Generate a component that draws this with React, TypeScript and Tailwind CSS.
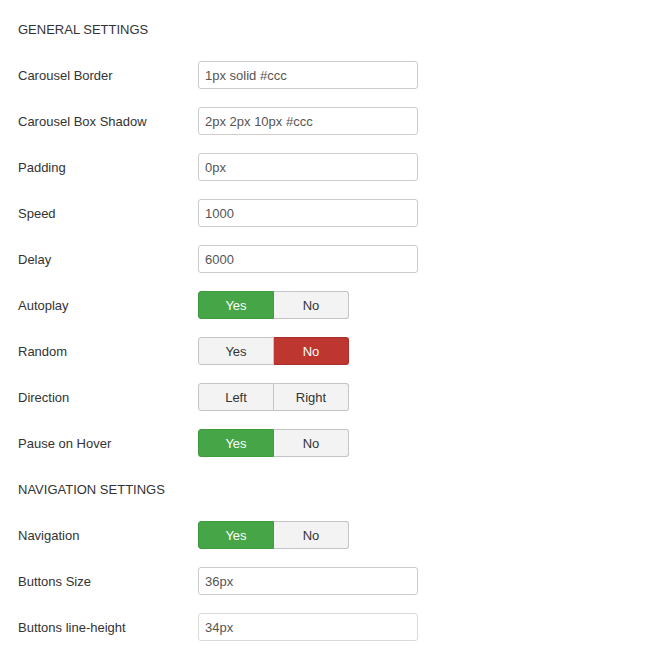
type Field =
    | { kind: 'heading'; label: string }
    | { kind: 'text'; label: string; value: string; faded?: boolean }
    | { kind: 'toggle'; label: string; options: [string, string]; active?: 0 | 1; tone?: 'yes' | 'no' }

const fields: Field[] = [
    { kind: 'heading', label: 'General Settings' },
    { kind: 'text', label: 'Carousel Border', value: '1px solid #ccc' },
    { kind: 'text', label: 'Carousel Box Shadow', value: '2px 2px 10px #ccc' },
    { kind: 'text', label: 'Padding', value: '0px' },
    { kind: 'text', label: 'Speed', value: '1000' },
    { kind: 'text', label: 'Delay', value: '6000' },
    { kind: 'toggle', label: 'Autoplay', options: ['Yes', 'No'], active: 0, tone: 'yes' },
    { kind: 'toggle', label: 'Random', options: ['Yes', 'No'], active: 1, tone: 'no' },
    { kind: 'toggle', label: 'Direction', options: ['Left', 'Right'] },
    { kind: 'toggle', label: 'Pause on Hover', options: ['Yes', 'No'], active: 0, tone: 'yes' },
    { kind: 'heading', label: 'Navigation Settings' },
    { kind: 'toggle', label: 'Navigation', options: ['Yes', 'No'], active: 0, tone: 'yes' },
    { kind: 'text', label: 'Buttons Size', value: '36px' },
    { kind: 'text', label: 'Buttons line-height', value: '34px', faded: true },
]

function Toggle({ options, active, tone }: { options: [string, string]; active?: 0 | 1; tone?: 'yes' | 'no' }) {
    return (
        <div className="flex h-[28px]">
            {options.map((opt, i) => {
                const on = active === i
                const colour = on
                    ? tone === 'yes'
                        ? 'bg-[#46a546] border-[#3f9a3f] text-white'
                        : 'bg-[#bd362f] border-[#a9302a] text-white'
                    : 'bg-[#f3f3f3] border-[#c4c4c4] text-[#333]'
                const shape =
                    i === 0
                        ? 'w-[76px] rounded-l-[3px] border'
                        : 'w-[75px] rounded-r-[3px] border border-l-0'
                return (
                    <div
                        key={opt}
                        className={`${shape} ${colour} flex items-center justify-center pt-px text-[13px]`}
                    >
                        {opt}
                    </div>
                )
            })}
        </div>
    )
}

export default function App() {
    return (
        <div
            className="min-h-[648px] bg-white pl-[18px] pt-[15px] text-[13px] text-[#333]"
            style={{ fontFamily: '"Liberation Sans", Arial, sans-serif' }}
        >
            <div className="flex flex-col gap-[18px]">
                {fields.map((f) => {
                    if (f.kind === 'heading') {
                        return (
                            <div key={f.label} className="flex h-[28px] items-center pt-px uppercase">
                                {f.label}
                            </div>
                        )
                    }
                    return (
                        <div key={f.label} className="flex h-[28px] items-center">
                            <div className="w-[180px] shrink-0 pt-px">{f.label}</div>
                            {f.kind === 'text' ? (
                                <div
                                    className={`flex h-[28px] w-[220px] items-center rounded-[3px] border px-[6px] pt-px text-[#555] ${
                                        f.faded ? 'border-[#dadada]' : 'border-[#ccc]'
                                    }`}
                                >
                                    {f.value}
                                </div>
                            ) : (
                                <Toggle options={f.options} active={f.active} tone={f.tone} />
                            )}
                        </div>
                    )
                })}
            </div>
        </div>
    )
}
